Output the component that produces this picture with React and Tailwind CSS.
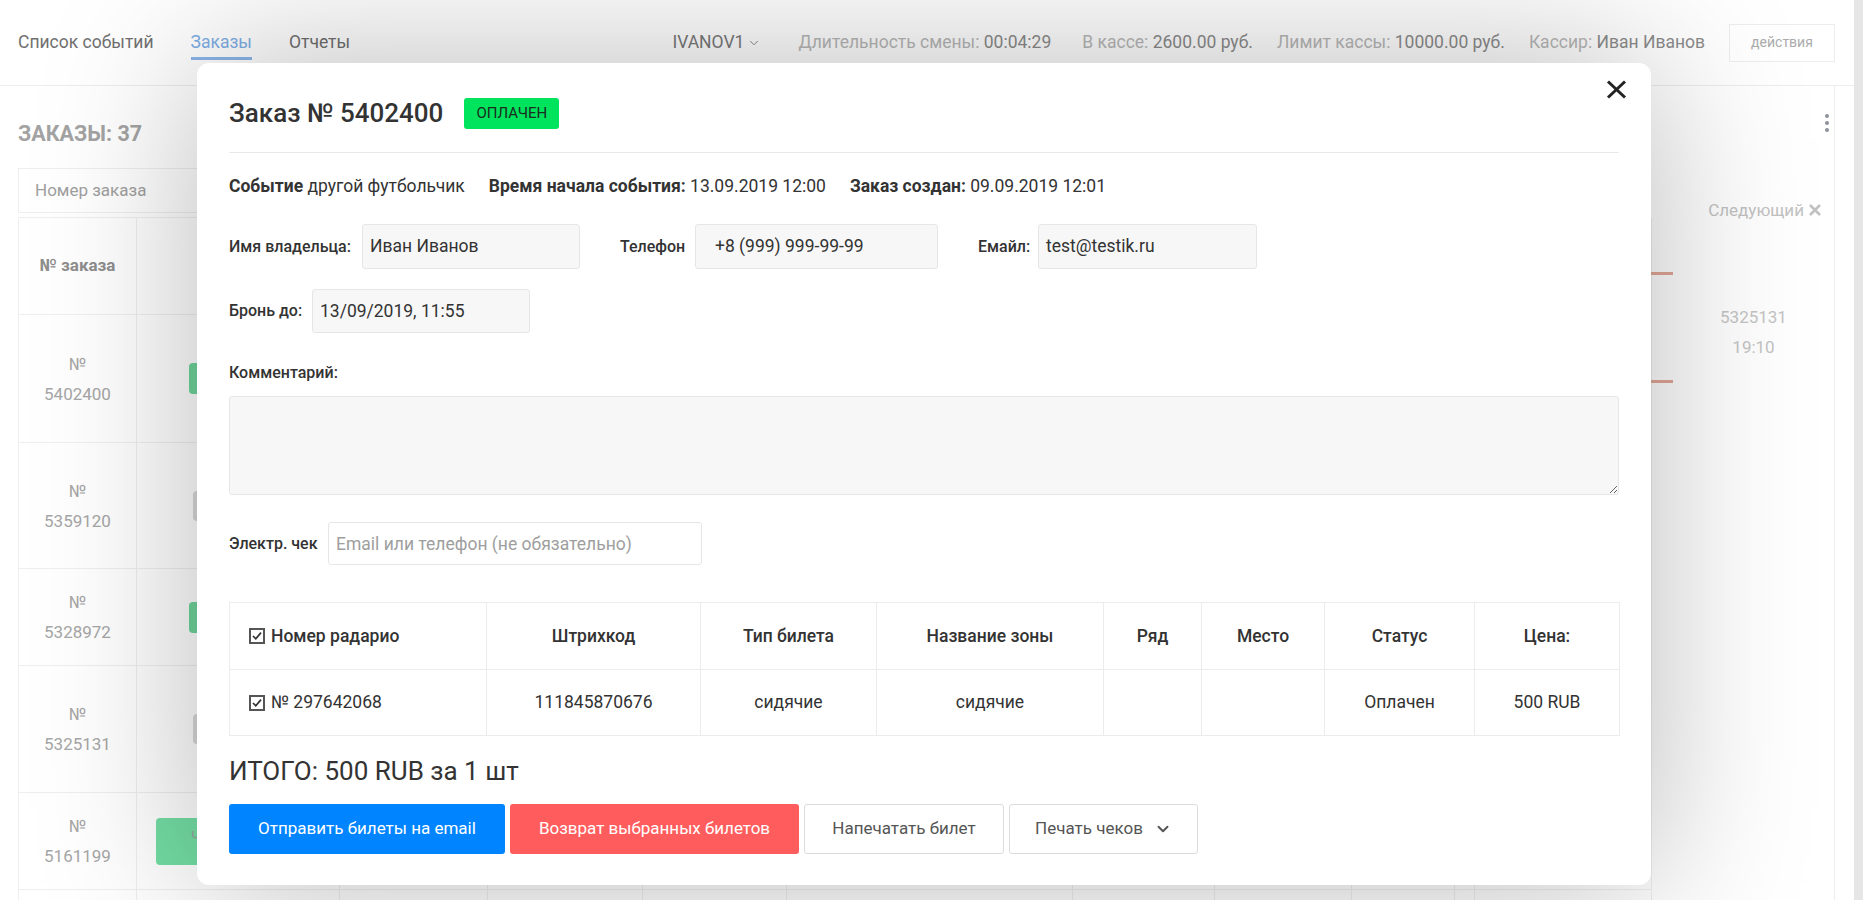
import React from "react";
import { ChevronDown } from "lucide-react";

const bgCols = [118, 203, 148, 155, 144, 286, 142, 137, 103, 20, 177];
const bgRows = [
  { h: 128, num: "5402400", badge: "green" },
  { h: 126, num: "5359120", badge: "gray" },
  { h: 97, num: "5328972", badge: "green" },
  { h: 127, num: "5325131", badge: "gray" },
  { h: 97, num: "5161199", badge: "big" },
  { h: 97, num: "", badge: "" },
];

const CheckBox = () => (
  <svg width="16" height="16" viewBox="0 0 16 16" className="shrink-0">
    <rect x="1" y="1" width="14" height="14" fill="none" stroke="#555" strokeWidth="2" />
    <path d="M4 8 L6.8 10.8 L12 4.6" fill="none" stroke="#333" strokeWidth="1.7" />
  </svg>
);

const Background = () => (
  <div className="flex h-[900px] w-full overflow-hidden bg-white">
    <div className="flex flex-1 flex-col">
      {/* Top navigation */}
      <nav className="flex h-[86px] shrink-0 items-center border-b border-[#ededed] pl-[18px] pr-[19px]">
        <div className="flex items-center gap-[37px] text-[17.5px] text-[#707070]">
          <span>Список событий</span>
          <span className="relative text-[#7eaee6]">
            Заказы
            <span className="absolute left-0 right-0 top-[28px] h-[3px] bg-[#8bb6ea]" />
          </span>
          <span>Отчеты</span>
        </div>
        <div className="ml-auto flex items-center text-[17.5px] text-[#b8b8b8]">
          <span className="flex items-center gap-[3px] text-[#7a7a7a]">
            IVANOV1 <ChevronDown size={14} strokeWidth={1.5} />
          </span>
          <span className="ml-[37px]">
            Длительность смены: <span className="text-[#8c8c8c]">00:04:29</span>
          </span>
          <span className="ml-[31px]">
            В кассе: <span className="text-[#8c8c8c]">2600.00 руб.</span>
          </span>
          <span className="ml-[24px]">
            Лимит кассы: <span className="text-[#8c8c8c]">10000.00 руб.</span>
          </span>
          <span className="ml-[24px]">
            Кассир: <span className="text-[#8c8c8c]">Иван Иванов</span>
          </span>
          <button className="ml-[24px] flex h-[38px] w-[106px] items-center justify-center border border-[#ededed] text-[14px] text-[#acacac]">
            действия
          </button>
        </div>
      </nav>

      <div className="flex flex-1">
        <main className="w-[1651px] shrink-0 pl-[18px]">
          <div className="h-[82px] pt-[35px] text-[21.5px] font-bold leading-[26px] text-[#a3a3a3]">ЗАКАЗЫ: 37</div>
          <div className="flex h-[45px] w-[1500px] items-center border border-[#eeeeee] px-[16px] text-[17px] text-[#a0a0a0]">
            Номер заказа
          </div>
          <div className="mt-[4px] border-l border-t border-[#efefef]">
            <div className="flex h-[97px]">
              {bgCols.map((w, i) => (
                <div
                  key={i}
                  className="flex shrink-0 items-center justify-center border-b border-r border-[#efefef] text-[17px] font-bold text-[#8e8e8e]"
                  style={{ width: w }}
                >
                  {i === 0 ? "№ заказа" : ""}
                </div>
              ))}
            </div>
            {bgRows.map((r, ri) => (
              <div key={ri} className="flex" style={{ height: r.h }}>
                {bgCols.map((w, i) => (
                  <div
                    key={i}
                    className={`flex shrink-0 flex-col justify-center border-b border-r border-[#efefef] text-[17px] leading-[30px] text-[#a6a6a6] ${
                      i === 1 ? "items-start" : "items-center"
                    }`}
                    style={{ width: w }}
                  >
                    {i === 0 && r.num && (
                      <>
                        <span>№</span>
                        <span>{r.num}</span>
                      </>
                    )}
                    {i === 1 && r.badge === "green" && (
                      <div className="ml-[52px] h-[31px] w-[100px] rounded-[4px] bg-[#6fd69c]" />
                    )}
                    {i === 1 && r.badge === "gray" && (
                      <div className="ml-[56px] h-[30px] w-[100px] rounded-[4px] bg-[#d9d9d9]" />
                    )}
                    {i === 1 && r.badge === "big" && (
                      <div className="ml-[19px] flex h-[47px] w-[160px] items-start rounded-[4px] bg-[#74dea4] pl-[35px] pt-[4px] text-[15px] text-[#9aa59e]">
                        Ч
                      </div>
                    )}
                  </div>
                ))}
              </div>
            ))}
          </div>
        </main>

        <aside className="flex w-[184px] shrink-0 flex-col border-r border-[#eeeeee]">
          <div className="mr-[5px] mt-[28px] flex flex-col items-center gap-[3px] self-end">
            <span className="h-[4px] w-[4px] rounded-full bg-[#8d939b]" />
            <span className="h-[4px] w-[4px] rounded-full bg-[#8d939b]" />
            <span className="h-[4px] w-[4px] rounded-full bg-[#8d939b]" />
          </div>
          <div className="mr-[12px] mt-[68px] flex items-center gap-[4px] self-end text-[17px] leading-[20px] text-[#c2c2c2]">
            Следующий
            <svg width="14" height="14" viewBox="0 0 14 14">
              <path d="M2 2 L12 12 M12 2 L2 12" stroke="#c2c2c2" strokeWidth="2.6" />
            </svg>
          </div>
          <div className="mt-[52px] flex h-[111px]">
            <div className="h-full w-[22px] border-y-[3px] border-[#e3a897]" />
            <div className="flex flex-1 flex-col items-center pt-[30px] text-[17px] leading-[30px] text-[#c4c4c4]">
              <span>5325131</span>
              <span>19:10</span>
            </div>
          </div>
        </aside>
      </div>
    </div>
    <div className="w-[9px] shrink-0 bg-[#e6e6e6]" />
  </div>
);

const Field = ({ label, labelW, inputW, h, value, padL = "pl-[7px]" }) => (
  <div className="flex items-center">
    <span className="shrink-0 text-[16px] font-medium text-[#333]" style={{ width: labelW }}>
      {label}
    </span>
    <div
      className={`flex items-center rounded-[3px] border border-[#e6e6e6] bg-[#f7f7f7] text-[17.5px] text-[#333] ${padL}`}
      style={{ width: inputW, height: h }}
    >
      {value}
    </div>
  </div>
);

const headers = ["Штрихкод", "Тип билета", "Название зоны", "Ряд", "Место", "Статус", "Цена:"];
const row = ["111845870676", "сидячие", "сидячие", "", "", "Оплачен", "500 RUB"];
const colW = [257, 214, 176, 227, 98, 123, 150, 145];

const OrderModal = () => (
  <div className="absolute left-[197px] top-[63px] h-[822px] w-[1454px] rounded-[12px] bg-white px-[32px] text-[#333] shadow-[0_0_160px_rgba(0,0,0,0.28)]">
    <button className="absolute right-[24px] top-[17px] flex h-[19px] w-[21px] items-center justify-center">
      <svg width="21" height="19" viewBox="0 0 21 19">
        <path d="M2 1.5 L19 17.5 M19 1.5 L2 17.5" stroke="#222" strokeWidth="3" />
      </svg>
    </button>

    {/* Header */}
    <div className="flex items-center gap-[21px] pt-[35px]">
      <h2 className="text-[26px] font-medium leading-[31px] text-[#333]">Заказ № 5402400</h2>
      <span className="flex h-[31px] w-[95px] items-center justify-center rounded-[3px] bg-[#00e35c] text-[15px] text-[#1a2e20]">
        ОПЛАЧЕН
      </span>
    </div>
    <div className="mt-[23px] border-t border-[#e9e9e9]" />

    {/* Info */}
    <div className="mt-[21px] flex gap-[24px] text-[17.5px] leading-[24px] text-[#333]">
      <span>
        <b className="font-bold">Событие</b> другой футбольчик
      </span>
      <span>
        <b className="font-bold">Время начала события:</b> 13.09.2019 12:00
      </span>
      <span>
        <b className="font-bold">Заказ создан:</b> 09.09.2019 12:01
      </span>
    </div>

    <div className="mt-[26px] flex gap-[40px]">
      <Field label="Имя владельца:" labelW={133} inputW={218} h={45} value="Иван Иванов" />
      <Field label="Телефон" labelW={75} inputW={243} h={45} value="+8 (999) 999-99-99" padL="pl-[19px]" />
      <Field label="Емайл:" labelW={60} inputW={219} h={45} value="test@testik.ru" />
    </div>
    <div className="mt-[20px] flex">
      <Field label="Бронь до:" labelW={83} inputW={218} h={44} value="13/09/2019, 11:55" />
    </div>

    <div className="mt-[30px] text-[16px] font-medium leading-[20px]">Комментарий:</div>
    <textarea
      readOnly
      className="mt-[13px] block h-[99px] w-full rounded-[3px] border border-[#e6e6e6] bg-[#f7f7f7] outline-none"
    />

    <div className="mt-[27px] flex items-center">
      <span className="w-[99px] shrink-0 text-[16px] font-medium">Электр. чек</span>
      <input
        placeholder="Email или телефон (не обязательно)"
        className="h-[43px] w-[374px] rounded-[3px] border border-[#e6e6e6] bg-white pl-[7px] text-[17.5px] outline-none placeholder:text-[#9e9e9e]"
      />
    </div>

    {/* Tickets table */}
    <table className="mt-[37px] w-full table-fixed border-collapse border border-[#ececec] text-[17.5px]">
      <colgroup>
        {colW.map((w, i) => (
          <col key={i} style={{ width: w }} />
        ))}
      </colgroup>
      <thead>
        <tr className="h-[67px]">
          <th className="border border-[#ececec] pl-[19px] text-left font-medium">
            <span className="flex items-center gap-[6px]">
              <CheckBox /> Номер радарио
            </span>
          </th>
          {headers.map((h) => (
            <th key={h} className="border border-[#ececec] text-center font-medium">
              {h}
            </th>
          ))}
        </tr>
      </thead>
      <tbody>
        <tr className="h-[66px]">
          <td className="border border-[#ececec] pl-[19px]">
            <span className="flex items-center gap-[6px]">
              <CheckBox /> № 297642068
            </span>
          </td>
          {row.map((c, i) => (
            <td key={i} className="border border-[#ececec] text-center">
              {c}
            </td>
          ))}
        </tr>
      </tbody>
    </table>

    <div className="mt-[19px] text-[26px] leading-[32px] text-[#333]">ИТОГО: 500 RUB за 1 шт</div>

    <div className="mt-[17px] flex gap-[5px] text-[17px]">
      <button className="h-[50px] w-[276px] rounded-[3px] bg-[#0084ff] text-white">Отправить билеты на email</button>
      <button className="h-[50px] w-[289px] rounded-[3px] bg-[#ff5d5d] text-white">Возврат выбранных билетов</button>
      <button className="h-[50px] w-[200px] rounded-[3px] border border-[#dcdcdc] bg-white text-[#555]">Напечатать билет</button>
      <button className="flex h-[50px] w-[189px] items-center justify-center gap-[11px] rounded-[3px] border border-[#dcdcdc] bg-white text-[#555]">
        Печать чеков <ChevronDown size={18} strokeWidth={2.6} />
      </button>
    </div>
  </div>
);

export default function App() {
  return (
    <div className="relative h-[900px] w-full overflow-hidden font-[family-name:Roboto,'Noto_Sans',sans-serif]">
      <Background />
      <OrderModal />
    </div>
  );
}
